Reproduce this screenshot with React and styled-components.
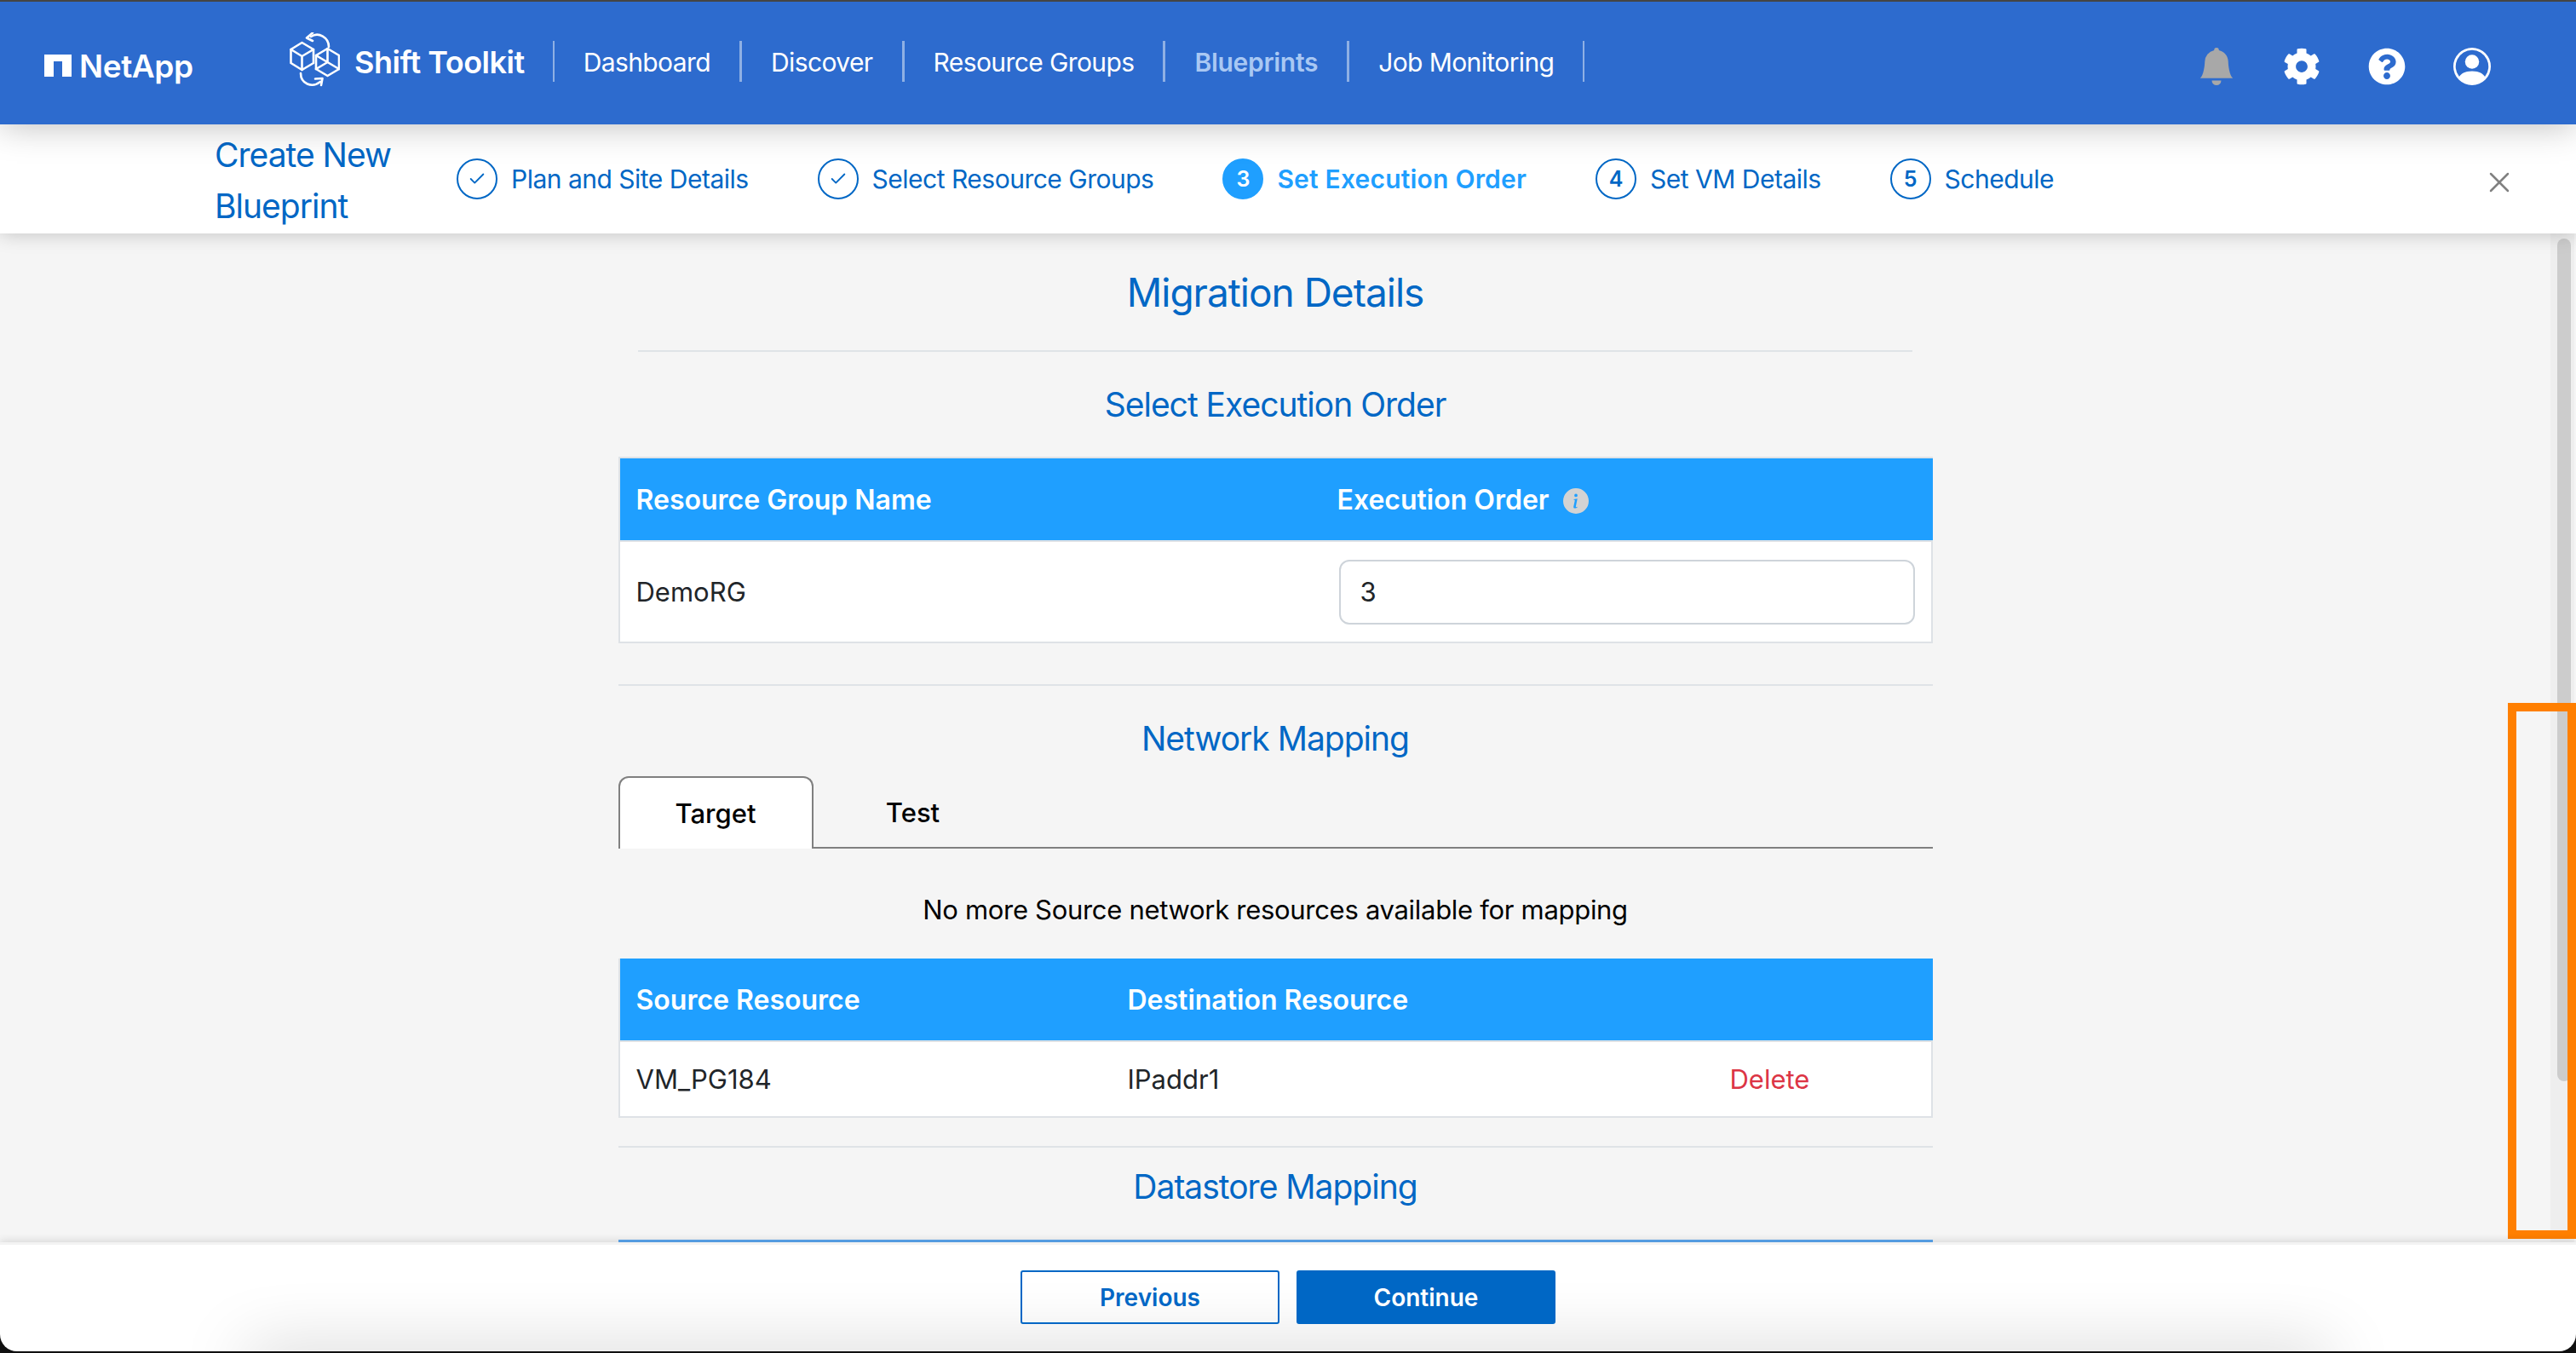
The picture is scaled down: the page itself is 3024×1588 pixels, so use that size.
import React from "react";
import styled, { createGlobalStyle } from "styled-components";
import { BsBellFill, BsInfoCircleFill, BsPersonCircle } from "react-icons/bs";
import { FaCog, FaQuestionCircle } from "react-icons/fa";
import { Check, X } from "lucide-react";

const GlobalStyle = createGlobalStyle`
  html, body {
    margin: 0;
    height: 100%;
    overflow: hidden;
    background: #111;
    font-family: Inter, "Liberation Sans", sans-serif;
    color: #212529;
  }
  * { box-sizing: border-box; }
`;

const navItems = ["Dashboard", "Discover", "Resource Groups", "Blueprints", "Job Monitoring"];

const steps = [
  { label: "Plan and Site Details", state: "done" },
  { label: "Select Resource Groups", state: "done" },
  { label: "Set Execution Order", state: "active", number: 3 },
  { label: "Set VM Details", state: "todo", number: 4 },
  { label: "Schedule", state: "todo", number: 5 },
];

function ShiftIcon() {
  return (
    <svg width="59" height="65" viewBox="0 0 59 65" fill="none" stroke="#fff" strokeWidth="2.6" strokeLinejoin="round" strokeLinecap="round">
      <path d="M14.5 12 L28 20 V36 L14.5 44 L1.5 36 V20 Z" />
      <path d="M1.5 20 L14.5 28 L28 20 M14.5 28 V44" />
      <path d="M44.5 19 L58 27 V43 L44.5 51 L31 43 V27 Z" />
      <path d="M31 27 L44.5 35 V19 M44.5 35 L58 43 M44.5 35 L31 43" />
      <path d="M46 17 C46 6 34 -1 25 5" />
      <path d="M27 0.5 L20 6.5 L27 10" />
      <path d="M13 48 C13 60 26 66 36 58" />
      <path d="M30 54.5 L38.5 54 L37 62" />
    </svg>
  );
}

function Step({ label, state, number }) {
  return (
    <StepItem>
      <StepCircle $state={state}>
        {state === "done" ? <Check size={22} strokeWidth={2} /> : number}
      </StepCircle>
      <StepLabel $active={state === "active"}>{label}</StepLabel>
    </StepItem>
  );
}

export default function App() {
  return (
    <>
      <GlobalStyle />
      <Page>
        <TopBar>
          <Brand>
            <LogoMark viewBox="0 0 32 26">
              <path d="M0 0H32V26H21V8H11V26H0Z" fill="#fff" />
            </LogoMark>
            NetApp
          </Brand>
          <Product>
            <ShiftIcon />
            <ProductName>Shift Toolkit</ProductName>
          </Product>
          <Nav>
            {navItems.map((item) => (
              <NavLink key={item} $active={item === "Blueprints"}>
                {item}
              </NavLink>
            ))}
          </Nav>
          <TopIcons>
            <IconSlot $muted><BsBellFill size={44} /></IconSlot>
            <IconSlot><FaCog size={44} /></IconSlot>
            <IconSlot><FaQuestionCircle size={44} /></IconSlot>
            <IconSlot><BsPersonCircle size={44} /></IconSlot>
          </TopIcons>
        </TopBar>

        <WizardBar>
          <WizardTitle>Create New<br />Blueprint</WizardTitle>
          <Steps>
            {steps.map((s) => (
              <Step key={s.label} {...s} />
            ))}
          </Steps>
          <CloseButton><X size={40} strokeWidth={1.5} /></CloseButton>
        </WizardBar>

        <Body>
          <Main>
            <Column>
              <PageTitle>Migration Details</PageTitle>
              <ShortRule />
              <SectionTitle>Select Execution Order</SectionTitle>
              <Table $mt={36} $framed>
                <HeadRow $columns="823px 1fr">
                  <HeadCell>Resource Group Name</HeadCell>
                  <HeadCell>
                    Execution Order
                    <InfoIcon><BsInfoCircleFill size={30} /></InfoIcon>
                  </HeadCell>
                </HeadRow>
                <BodyRow $columns="823px 1fr" $height={119}>
                  <BodyCell>DemoRG</BodyCell>
                  <BodyCell>
                    <OrderInput>3</OrderInput>
                  </BodyCell>
                </BodyRow>
              </Table>
              <Rule $mt={48} />
              <SectionTitle>Network Mapping</SectionTitle>
              <Tabs>
                <Tab $active>Target</Tab>
                <Tab>Test</Tab>
              </Tabs>
              <Message>No more Source network resources available for mapping</Message>
              <Table $mt={37}>
                <HeadRow $columns="577px 707px 1fr">
                  <HeadCell>Source Resource</HeadCell>
                  <HeadCell>Destination Resource</HeadCell>
                  <HeadCell />
                </HeadRow>
                <BodyRow $columns="577px 707px 1fr" $height={89}>
                  <BodyCell>VM_PG184</BodyCell>
                  <BodyCell>IPaddr1</BodyCell>
                  <DeleteCell>Delete</DeleteCell>
                </BodyRow>
              </Table>
              <Rule $mt={33} />
              <SectionTitle $mt={21}>Datastore Mapping</SectionTitle>
              <ClippedHead />
            </Column>
          </Main>
          <ScrollTrack>
            <ScrollThumb />
          </ScrollTrack>
          <Callout />
        </Body>

        <Footer>
          <FooterShade />
          <OutlineButton>Previous</OutlineButton>
          <SolidButton>Continue</SolidButton>
        </Footer>
      </Page>
    </>
  );
}

const Page = styled.div`
  position: relative;
  width: 3024px;
  height: 1588px;
  display: flex;
  flex-direction: column;
  overflow: hidden;
  background: #111;
  padding-bottom: 2px;
`;

const TopBar = styled.header`
  position: relative;
  z-index: 3;
  flex: 0 0 146px;
  display: flex;
  align-items: flex-start;
  background: #2d6bce;
  border-top: 2px solid #444;
  box-shadow: 0 0 40px rgba(0, 0, 0, 0.28);
  color: #fff;
`;

const Brand = styled.div`
  display: flex;
  align-items: center;
  gap: 9px;
  margin: 53px 0 0 52px;
  width: 288px;
  height: 44px;
  font-size: 37px;
  font-weight: 600;
  letter-spacing: -0.4px;
`;

const LogoMark = styled.svg`
  width: 32px;
  height: 26px;
`;

const Product = styled.div`
  display: flex;
  align-items: center;
  gap: 17px;
  margin-top: 36px;
  padding-right: 33px;
`;

const ProductName = styled.span`
  font-size: 36px;
  font-weight: 600;
  letter-spacing: -0.5px;
  position: relative;
  top: 2px;
`;

const Nav = styled.nav`
  display: flex;
  margin-top: 46px;
  border-left: 2px solid #8fb0e4;
`;

const NavLink = styled.a`
  display: flex;
  align-items: center;
  height: 48px;
  padding: 2px 34px 0;
  font-size: 30px;
  font-weight: ${(p) => (p.$active ? 600 : 400)};
  letter-spacing: ${(p) => (p.$active ? -0.3 : -0.6)}px;
  color: ${(p) => (p.$active ? "#a9c8f3" : "#fff")};
  border-right: 3px solid #8fb0e4;
  white-space: nowrap;

  &:last-child {
    border-right-width: 2px;
  }
`;

const TopIcons = styled.div`
  margin-left: auto;
  margin-top: 54px;
  padding-right: 100px;
  display: flex;
  gap: 56px;
`;

const IconSlot = styled.span`
  display: flex;
  width: 44px;
  height: 44px;
  color: ${(p) => (p.$muted ? "#a8a8a8" : "#fff")};
`;

const WizardBar = styled.div`
  position: relative;
  z-index: 2;
  flex: 0 0 128px;
  display: flex;
  align-items: center;
  padding-left: 252px;
  background: #fff;
  box-shadow: 0 0 22px rgba(0, 0, 0, 0.22);
`;

const WizardTitle = styled.h1`
  width: 284px;
  margin: 4px 0 0;
  font-size: 39px;
  font-weight: 400;
  letter-spacing: -1px;
  line-height: 60px;
  color: #0067c5;
`;

const Steps = styled.div`
  display: flex;
  gap: 81px;
`;

const StepItem = styled.div`
  display: flex;
  align-items: center;
  gap: 16px;
`;

const StepCircle = styled.span`
  display: flex;
  align-items: center;
  justify-content: center;
  width: 48px;
  height: 48px;
  border-radius: 50%;
  font-size: 25px;
  font-weight: 600;
  border: 2px solid ${(p) => (p.$state === "active" ? "#1f9fff" : "#0067c5")};
  background: ${(p) => (p.$state === "active" ? "#1f9fff" : "#fff")};
  color: ${(p) => (p.$state === "active" ? "#fff" : "#0067c5")};
`;

const StepLabel = styled.span`
  font-size: 30px;
  font-weight: ${(p) => (p.$active ? 600 : 400)};
  letter-spacing: ${(p) => (p.$active ? 0.2 : -0.5)}px;
  color: ${(p) => (p.$active ? "#1f9fff" : "#0067c5")};
  white-space: nowrap;
`;

const CloseButton = styled.span`
  position: absolute;
  left: 2914px;
  top: 48px;
  display: flex;
  color: #808080;
`;

const Body = styled.div`
  position: relative;
  flex: 1;
  min-height: 0;
  display: flex;
  background: #f5f5f5;
`;

const Main = styled.main`
  flex: 1;
  min-width: 0;
  overflow: hidden;
  display: flex;
  justify-content: center;
`;

const Column = styled.div`
  width: 1543px;
  flex: none;
`;

const PageTitle = styled.h2`
  margin: 39px 0 0;
  height: 60px;
  line-height: 60px;
  font-size: 46px;
  font-weight: 400;
  letter-spacing: -1px;
  text-align: center;
  color: #0067c5;
`;

const ShortRule = styled.div`
  height: 2px;
  margin: 38px 24px 0 23px;
  background: #dfe3e7;
`;

const Rule = styled.div`
  height: 2px;
  margin-top: ${(p) => p.$mt}px;
  background: #dfe3e7;
`;

const SectionTitle = styled.h3`
  margin: ${(p) => p.$mt ?? 37}px 0 0;
  height: 50px;
  line-height: 50px;
  font-size: 39px;
  font-weight: 400;
  letter-spacing: -1px;
  text-align: center;
  color: #0067c5;
`;

const Table = styled.div`
  margin-top: ${(p) => p.$mt}px;
  border: 2px solid #dee2e6;
  border-top-width: ${(p) => (p.$framed ? 2 : 0)}px;
  background: #fff;
`;

const HeadRow = styled.div`
  display: grid;
  grid-template-columns: ${(p) => p.$columns};
  align-items: center;
  height: 96px;
  background: #1f9fff;
  margin: 0 -2px 0 0;
`;

const HeadCell = styled.div`
  display: flex;
  align-items: center;
  padding-left: 19px;
  font-size: 32px;
  font-weight: 600;
  color: #fff;
`;

const InfoIcon = styled.span`
  display: flex;
  margin: 4px 0 0 16px;
  color: #d3d3d3;
`;

const BodyRow = styled.div`
  display: grid;
  grid-template-columns: ${(p) => p.$columns};
  align-items: center;
  height: ${(p) => p.$height}px;
  border-top: 2px solid #dee2e6;
`;

const BodyCell = styled.div`
  padding-left: 19px;
  font-size: 31px;
  color: #212529;
`;

const DeleteCell = styled(BodyCell)`
  color: #dc3545;
`;

const OrderInput = styled.div`
  display: flex;
  align-items: center;
  width: 676px;
  height: 76px;
  margin-left: 2px;
  padding-left: 23px;
  border: 2px solid #ced4da;
  border-radius: 12px;
  background: #fff;
`;

const Tabs = styled.div`
  display: flex;
  margin-top: 19px;
  border-bottom: 2px solid #808080;
  height: 85px;
`;

const Tab = styled.div`
  display: flex;
  align-items: center;
  justify-content: center;
  width: ${(p) => (p.$active ? 229 : 234)}px;
  height: 85px;
  font-size: 31px;
  font-weight: 500;
  color: #000;
  ${(p) =>
    p.$active &&
    `
    background: #fff;
    border: 2px solid #808080;
    border-bottom: 0;
    border-radius: 12px 12px 0 0;
  `}
`;

const Message = styled.p`
  margin: 52px 0 0;
  height: 40px;
  line-height: 40px;
  font-size: 31px;
  letter-spacing: -0.3px;
  text-align: center;
  color: #000;
`;

const ClippedHead = styled.div`
  height: 96px;
  margin-top: 37px;
  background: #5aa7f0;
`;

const ScrollTrack = styled.div`
  flex: 0 0 28px;
  margin-right: 2px;
  padding: 6px 4px 0 8px;
  background: #eee;
`;

const ScrollThumb = styled.div`
  height: 989px;
  border-radius: 8px;
  background: #ccc;
`;

const Callout = styled.div`
  position: absolute;
  left: 2944px;
  top: 551px;
  width: 80px;
  height: 629px;
  border: 10px solid #ff7f00;
  pointer-events: none;
`;

const Footer = styled.footer`
  position: relative;
  z-index: 2;
  flex: 0 0 128px;
  display: flex;
  justify-content: center;
  align-items: flex-start;
  gap: 20px;
  padding: 30px 0 0 0;
  background: #fff;
  border-top: 3px solid #f3f3f3;
  border-radius: 0 0 20px 20px;
  box-shadow: 0 -2px 10px rgba(0, 0, 0, 0.12);
`;

const FooterShade = styled.div`
  position: absolute;
  inset: 0;
  overflow: hidden;
  border-radius: inherit;

  &::after {
    content: "";
    position: absolute;
    left: 290px;
    right: 290px;
    bottom: -40px;
    height: 40px;
    box-shadow: 0 0 80px rgba(0, 0, 0, 0.21);
  }
`;

const OutlineButton = styled.button`
  width: 304px;
  height: 63px;
  position: relative;
  z-index: 1;
  border: 2px solid #0067c5;
  border-radius: 3px;
  background: transparent;
  font: 600 28px Inter, "Liberation Sans", sans-serif;
  color: #0067c5;
`;

const SolidButton = styled(OutlineButton)`
  background: #0067c5;
  color: #fff;
`;
